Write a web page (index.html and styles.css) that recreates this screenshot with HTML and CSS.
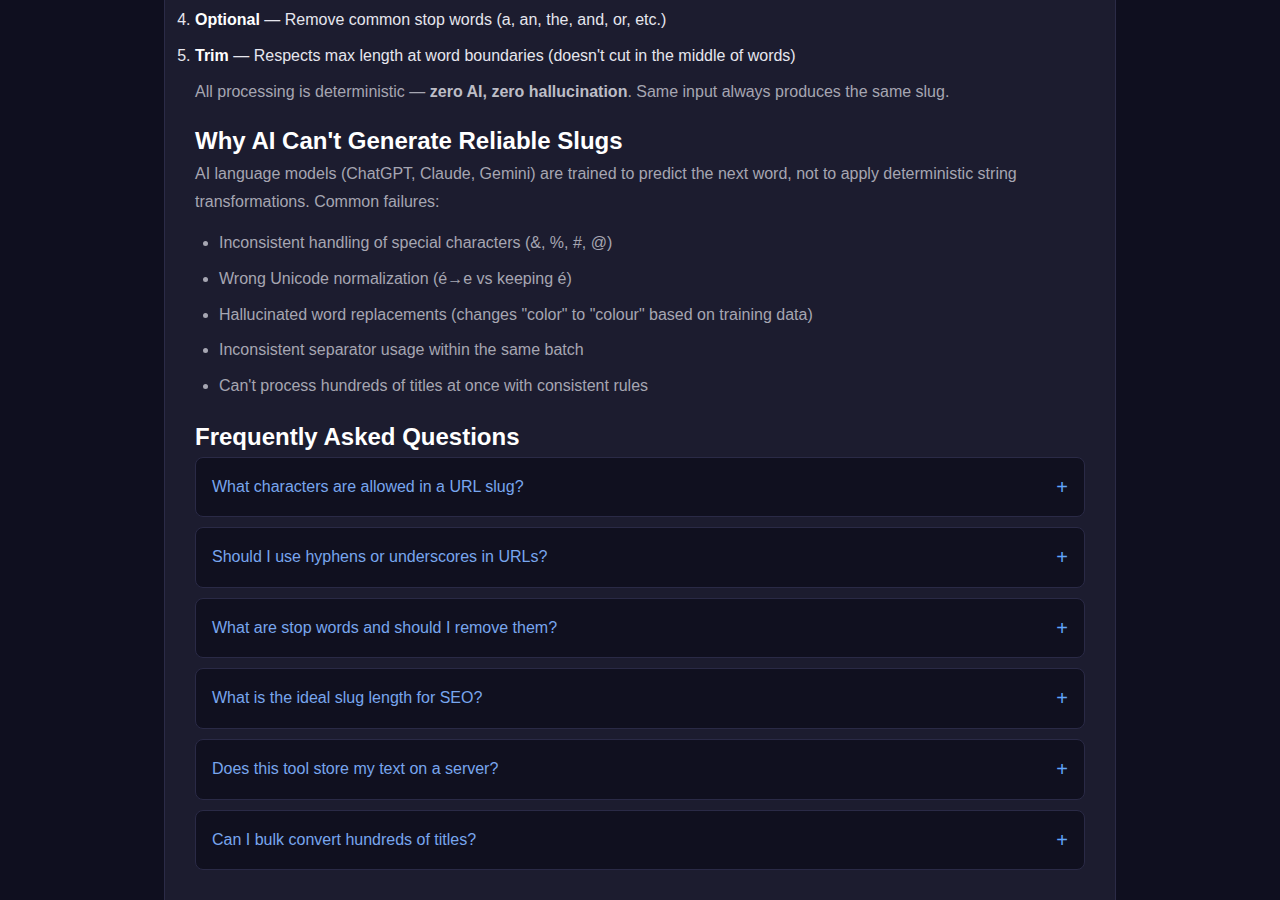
FILE: index.html
```html
<!DOCTYPE html>
<html lang="en">
<head>
    <meta charset="UTF-8">
    <meta name="viewport" content="width=device-width, initial-scale=1.0">
    <title>URL Slug Generator</title>
    <link rel="stylesheet" href="styles.css">
</head>
<body>
   <main class="card">
      <ol class="steps" start="4">
         <li><strong>Optional</strong> — Remove common stop words (a, an, the, and, or, etc.)</li>
         <li><strong>Trim</strong> — Respects max length at word boundaries (doesn't cut in the middle of words)</li>
      </ol>
      <p class="muted">All processing is deterministic — <strong>zero AI, zero hallucination</strong>. Same input always produces the same slug.</p>

      <h2>Why AI Can't Generate Reliable Slugs</h2>
      <p class="muted">AI language models (ChatGPT, Claude, Gemini) are trained to predict the next word, not to apply deterministic string transformations. Common failures:</p>
      <ul class="fails">
         <li>Inconsistent handling of special characters (&amp;, %, #, @)</li>
         <li>Wrong Unicode normalization (é→e vs keeping é)</li>
         <li>Hallucinated word replacements (changes "color" to "colour" based on training data)</li>
         <li>Inconsistent separator usage within the same batch</li>
         <li>Can't process hundreds of titles at once with consistent rules</li>
      </ul>

      <h2>Frequently Asked Questions</h2>
      <div class="faq">
         <div class="faq-item"><span>What characters are allowed in a URL slug?</span><span class="plus">+</span></div>
         <div class="faq-item"><span>Should I use hyphens or underscores in URLs?</span><span class="plus">+</span></div>
         <div class="faq-item"><span>What are stop words and should I remove them?</span><span class="plus">+</span></div>
         <div class="faq-item"><span>What is the ideal slug length for SEO?</span><span class="plus">+</span></div>
         <div class="faq-item"><span>Does this tool store my text on a server?</span><span class="plus">+</span></div>
         <div class="faq-item"><span>Can I bulk convert hundreds of titles?</span><span class="plus">+</span></div>
      </div>
   </main>
</body>
</html>
```

FILE: styles.css
```css
body {
    font-family: 'Liberation Sans', Arial, sans-serif;
    background-color: #0f0f1f; /* page background */
    color: #e6e6ee;
    margin: 0;
    padding: 0;
    font-size: 16px;
    line-height: 1.7;
}

.card {
    width: 890px;
    margin: 0 auto;
    padding: 6px 30px 28px;
    background-color: #1c1c2f;
    border: 1px solid #2b2b47;
    border-top: none;
    height: 900px;
    box-sizing: content-box;
}

.steps {
    margin: 0 0 8.8px;
    padding-left: 0;
}

.steps li {
    margin-bottom: 8.8px;
}

.steps li:last-child {
    margin-bottom: 0;
}

.steps strong {
    color: #fff;
}

.muted {
    color: #a6a6b2;
    margin: 0;
}

.muted strong {
    color: #bdbdc6;
}

h2 {
    color: #fff;
    font-size: 24px;
    line-height: 1.3;
    margin: 20px 0 4px;
}

.fails {
    color: #a6a6b2;
    margin: 14.4px 0 22px;
    padding-left: 24px;
}

.fails li {
    margin-bottom: 8.6px;
}

.fails li:last-child {
    margin-bottom: 0;
}

.faq {
    display: flex;
    flex-direction: column;
    gap: 10px;
}

.faq-item {
    display: flex;
    justify-content: space-between;
    align-items: center;
    padding: 16px;
    line-height: 26.6px;
    background-color: #10101f;
    border: 1px solid #2a2a46;
    border-radius: 8px;
    color: #78a6ee; /* question text */
}

.plus {
    color: #60a5fa;
    font-size: 20px;
}
```
